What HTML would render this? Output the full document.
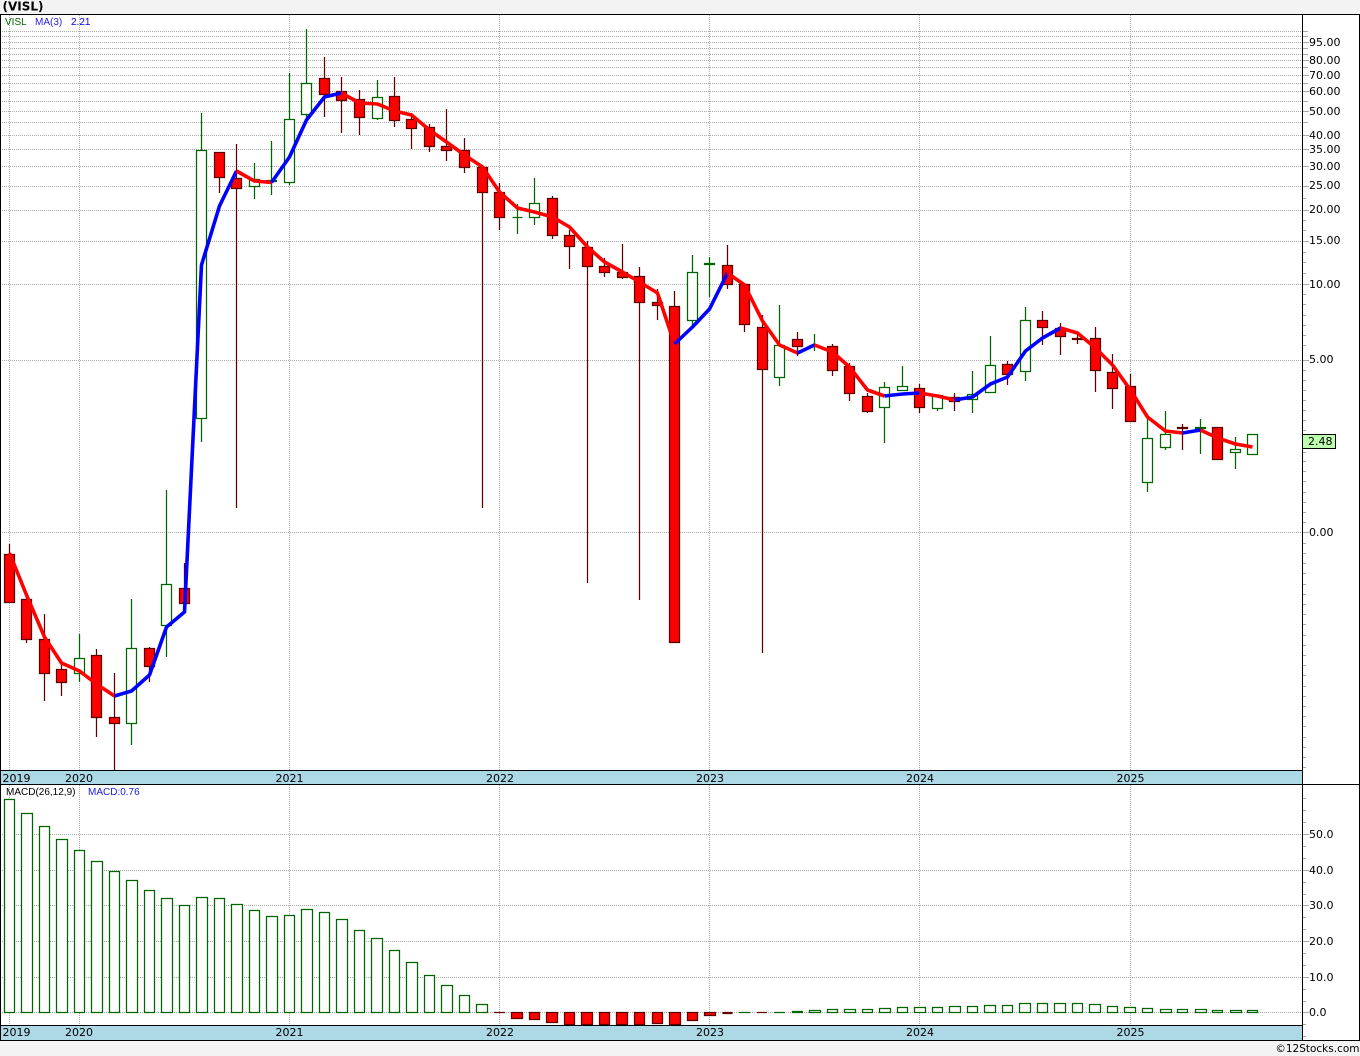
<!DOCTYPE html>
<html><head><meta charset="utf-8"><title>VISL</title>
<style>
html,body{margin:0;padding:0;background:#f3f3f3;width:1360px;height:1056px;overflow:hidden}
svg{display:block}
text{font-family:"DejaVu Sans","Liberation Sans",sans-serif;fill:#000}
.a{font-size:11px}.l{font-size:10px;font-family:"Liberation Sans",sans-serif}
</style></head><body>
<svg width="1360" height="1056" viewBox="0 0 1360 1056" xmlns="http://www.w3.org/2000/svg">
<rect x="0" y="14" width="1360" height="1026" fill="#fff"/>
<g shape-rendering="crispEdges" fill="none">
<path stroke="#a8a8a8" stroke-dasharray="1 1" d="M2 31.5H1303M2 36.5H1303M2 42.5H1303M2 48.5H1303M2 54.5H1303M2 60.5H1303M2 67.5H1303M2 75.5H1303M2 83.5H1303M2 91.5H1303M2 101.5H1303M2 111.5H1303M2 122.5H1303M2 135.5H1303M2 149.5H1303M2 166.5H1303M2 186.5H1303M2 210.5H1303M2 241.5H1303M2 284.5H1303M2 360.5H1303M2 532.5H1303M2 834.5H1303M2 870.5H1303M2 905.5H1303M2 941.5H1303M2 977.5H1303M2 1012.5H1303"/>
<path stroke="#a8a8a8" stroke-dasharray="1 1" d="M9.5 15V770M79.5 15V770M289.5 15V770M499.5 15V770M709.5 15V770M919.5 15V770M1130.5 15V770M9.5 785V1025M79.5 785V1025M289.5 785V1025M499.5 785V1025M709.5 785V1025M919.5 785V1025M1130.5 785V1025"/>
<path stroke="#a8a8a8" d="M1303 31.5h5M1303 36.5h5M1303 42.5h6M1303 48.5h5M1303 54.5h5M1303 60.5h6M1303 67.5h5M1303 75.5h6M1303 83.5h5M1303 91.5h6M1303 101.5h5M1303 111.5h6M1303 122.5h5M1303 135.5h6M1303 149.5h6M1303 166.5h6M1303 186.5h6M1303 198.5h3M1303 210.5h6M1303 220.5h3M1303 230.5h3M1303 241.5h6M1303 252.5h3M1303 262.5h3M1303 273.5h3M1303 284.5h6M1303 294.5h3M1303 304.5h3M1303 315.5h3M1303 325.5h3M1303 335.5h3M1303 345.5h3M1303 360.5h6M1303 370.5h3M1303 380.5h3M1303 390.5h3M1303 400.5h3M1303 410.5h3M1303 420.5h3M1303 430.5h3M1303 452.5h3M1303 461.5h3M1303 471.5h3M1303 481.5h3M1303 492.5h3M1303 502.5h3M1303 512.5h3M1303 522.5h3M1303 532.5h6M1303 543.5h3M1303 553.5h3M1303 563.5h3M1303 573.5h3M1303 584.5h3M1303 594.5h3M1303 604.5h3M1303 614.5h3M1303 624.5h3M1303 635.5h3M1303 645.5h3M1303 655.5h3M1303 665.5h3M1303 675.5h3M1303 686.5h3M1303 696.5h3M1303 706.5h3M1303 716.5h3M1303 726.5h3M1303 737.5h3M1303 747.5h3M1303 757.5h3M1303 767.5h3"/>
<path stroke="#a8a8a8" d="M1303 798.5h3M1303 810.5h3M1303 822.5h3M1303 834.5h6M1303 846.5h3M1303 858.5h3M1303 870.5h6M1303 882.5h3M1303 894.5h3M1303 905.5h6M1303 917.5h3M1303 929.5h3M1303 941.5h6M1303 953.5h3M1303 965.5h3M1303 977.5h6M1303 989.5h3M1303 1001.5h3M1303 1012.5h6M1303 1024.5h3M1303 1036.5h3"/>
</g>
<g fill="none" stroke-width="1.25">
<!-- down wicks -->
<path stroke="#5f0000" d="M9.5 544V603M26.5 597V643M44.5 614V701M61.5 663V696M96.5 649V737M114.5 673V770M149.5 647V682M184.5 563V603M219.5 152V193M236.5 144V508M324.5 57V117M341.5 77V133M359.5 90V135M394.5 77V127M411.5 113V149M429.5 124V152M446.5 109V161M464.5 138V173M482.5 165V508M499.5 183V230M552.5 196V239M569.5 230V269M587.5 241V583M604.5 258V277M622.5 244V279M639.5 267V600M657.5 289V320M674.5 291V642M727.5 245V289M744.5 283V332M762.5 315V653M797.5 332V356M832.5 344V376M849.5 363V401M867.5 393V413M919.5 384V413M954.5 393V411M1007.5 361V385M1042.5 311V345M1060.5 323V355M1077.5 332V344M1095.5 327V392M1112.5 354V409M1130.5 374V421M1182.5 424V450"/>
<!-- up wicks -->
<path stroke="#006400" d="M79.5 634V682M131.5 599V745M166.5 490V657M201.5 113V442M254.5 163V199M271.5 141V195M289.5 73V185M306.5 29V118M377.5 80V120M517.5 204V234M534.5 178V225M692.5 255V326M709.5 257V297M779.5 305V386M814.5 334V351M884.5 382V443M902.5 366V391M937.5 395V411M972.5 371V413M990.5 336V393M1025.5 307V381M1147.5 415V492M1165.5 411V450M1200.5 419V454M1235.5 437V469"/>
<!-- down bodies -->
<path fill="#ff0000" stroke="#5f0000" d="M4.5 554.5h10v48h-10zM21.5 599.5h10v40h-10zM39.5 639.5h10v34h-10zM56.5 669.5h10v13h-10zM91.5 655.5h10v62h-10zM109.5 717.5h10v6h-10zM144.5 648.5h10v18h-10zM179.5 588.5h10v15h-10zM214.5 152.5h10v25h-10zM231.5 178.5h10v10h-10zM319.5 78.5h10v16h-10zM336.5 91.5h10v9h-10zM354.5 99.5h10v18h-10zM389.5 96.5h10v24h-10zM406.5 119.5h10v9h-10zM424.5 127.5h10v19h-10zM441.5 146.5h10v4h-10zM459.5 150.5h10v17h-10zM477.5 167.5h10v25h-10zM494.5 192.5h10v25h-10zM547.5 198.5h10v37h-10zM564.5 235.5h10v11h-10zM582.5 247.5h10v19h-10zM599.5 266.5h10v6h-10zM617.5 272.5h10v5h-10zM634.5 276.5h10v26h-10zM652.5 302.5h10v3h-10zM669.5 306.5h10v336h-10zM722.5 265.5h10v19h-10zM739.5 284.5h10v40h-10zM757.5 327.5h10v42h-10zM792.5 339.5h10v7h-10zM827.5 346.5h10v24h-10zM844.5 366.5h10v27h-10zM862.5 396.5h10v15h-10zM914.5 388.5h10v19h-10zM949.5 397.5h10v4h-10zM1002.5 364.5h10v10h-10zM1037.5 320.5h10v7h-10zM1055.5 328.5h10v8h-10zM1072.5 338.5h10v1h-10zM1090.5 338.5h10v32h-10zM1107.5 372.5h10v16h-10zM1125.5 386.5h10v35h-10zM1177.5 427.5h10v1h-10zM1212.5 427.5h10v32h-10z"/>
<!-- up bodies -->
<path fill="#fff" stroke="#006400" d="M74.5 658.5h10v15h-10zM126.5 648.5h10v75h-10zM161.5 584.5h10v41h-10zM196.5 150.5h10v268h-10zM249.5 179.5h10v7h-10zM266.5 180.5h10v1h-10zM284.5 119.5h10v63h-10zM301.5 83.5h10v31h-10zM372.5 97.5h10v21h-10zM512.5 217.5h10M529.5 203.5h10v14h-10zM687.5 272.5h10v48h-10zM704.5 263.5h10v1h-10zM774.5 345.5h10v32h-10zM809.5 345.5h10M879.5 387.5h10v20h-10zM897.5 386.5h10v4h-10zM932.5 395.5h10v13h-10zM967.5 394.5h10v5h-10zM985.5 365.5h10v27h-10zM1020.5 320.5h10v51h-10zM1142.5 438.5h10v44h-10zM1160.5 434.5h10v13h-10zM1195.5 427.5h10v1h-10zM1230.5 449.5h10v3h-10zM1247.5 434.5h10v20h-10z"/>

<!-- MACD bars -->
<path fill="#fff" stroke="#006400" d="M4.5 799.5h10V1012.5h-10zM21.5 813.5h11V1012.5h-11zM39.5 826.5h10V1012.5h-10zM56.5 839.5h11V1012.5h-11zM74.5 850.5h10V1012.5h-10zM91.5 861.5h11V1012.5h-11zM109.5 871.5h10V1012.5h-10zM126.5 880.5h11V1012.5h-11zM144.5 890.5h10V1012.5h-10zM161.5 898.5h11V1012.5h-11zM179.5 905.5h10V1012.5h-10zM196.5 897.5h11V1012.5h-11zM214.5 898.5h10V1012.5h-10zM231.5 904.5h11V1012.5h-11zM249.5 910.5h10V1012.5h-10zM266.5 916.5h11V1012.5h-11zM284.5 915.5h10V1012.5h-10zM301.5 909.5h11V1012.5h-11zM319.5 912.5h10V1012.5h-10zM336.5 919.5h11V1012.5h-11zM354.5 930.5h10V1012.5h-10zM371.5 938.5h11V1012.5h-11zM389.5 950.5h10V1012.5h-10zM406.5 962.5h11V1012.5h-11zM424.5 975.5h10V1012.5h-10zM441.5 985.5h11V1012.5h-11zM459.5 995.5h10V1012.5h-10zM476.5 1004.5h11V1012.5h-11zM809.5 1010.5h11V1012.5h-11zM827.5 1009.5h10V1012.5h-10zM844.5 1009.5h11V1012.5h-11zM862.5 1009.5h10V1012.5h-10zM879.5 1008.5h11V1012.5h-11zM897.5 1007.5h10V1012.5h-10zM914.5 1007.5h11V1012.5h-11zM932.5 1007.5h10V1012.5h-10zM949.5 1006.5h11V1012.5h-11zM967.5 1006.5h10V1012.5h-10zM984.5 1005.5h11V1012.5h-11zM1002.5 1005.5h10V1012.5h-10zM1019.5 1003.5h11V1012.5h-11zM1037.5 1003.5h10V1012.5h-10zM1054.5 1003.5h11V1012.5h-11zM1072.5 1003.5h10V1012.5h-10zM1089.5 1004.5h11V1012.5h-11zM1107.5 1006.5h10V1012.5h-10zM1124.5 1007.5h11V1012.5h-11zM1142.5 1008.5h10V1012.5h-10zM1160.5 1009.5h11V1012.5h-11zM1177.5 1009.5h10V1012.5h-10zM1195.5 1009.5h11V1012.5h-11zM1212.5 1010.5h10V1012.5h-10zM1230.5 1010.5h11V1012.5h-11zM1247.5 1010.5h10V1012.5h-10z"/>
<path fill="#ff0000" stroke="#5f0000" d="M511.5 1012.5h11v6h-11zM529.5 1012.5h10v7h-10zM546.5 1012.5h11v10h-11zM564.5 1012.5h10v12h-10zM581.5 1012.5h11v12h-11zM599.5 1012.5h10v12h-10zM616.5 1012.5h11v12h-11zM634.5 1012.5h10v12h-10zM652.5 1012.5h10v11h-10zM669.5 1012.5h11v12h-11zM687.5 1012.5h10v8h-10zM704.5 1012.5h11v3h-11z"/>
<path stroke="#5f0000" d="M494 1012.5h11M722.5 1012.5h10M722.5 1013.5h10M757 1012.5h10"/>
<path stroke="#006400" d="M739 1012.5h11M774 1012.5h11M792 1011.5h11M792 1012.5h11"/>
</g>

<!-- moving average -->
<g fill="none" stroke-width="3.6" stroke-linejoin="round" stroke-linecap="butt">
<polyline stroke="#ff0000" points="9.5,553 26.5,595 44.5,637 61.5,663 79.5,671 96.5,684 114.5,696"/>
<polyline stroke="#0000ff" points="114.5,696 131.5,691 149.5,675 166.5,627 184.5,612 201.5,265 219.5,206 236.5,171"/>
<polyline stroke="#ff0000" points="236.5,171 254.5,181 271.5,182.5"/>
<polyline stroke="#0000ff" points="271.5,182.5 289.5,157 306.5,120 324.5,97 341.5,93"/>
<polyline stroke="#ff0000" points="341.5,93 359.5,103 377.5,104 394.5,111 411.5,115 429.5,130 446.5,142 464.5,155 482.5,167 499.5,192 517.5,208 534.5,212 552.5,217 569.5,227 587.5,247 604.5,262 622.5,272 639.5,282 657.5,293 674.5,344"/>
<polyline stroke="#0000ff" points="674.5,344 692.5,327 709.5,309 727.5,273"/>
<polyline stroke="#ff0000" points="727.5,273 744.5,285 762.5,321 779.5,345 797.5,353"/>
<polyline stroke="#0000ff" points="797.5,353 814.5,345"/>
<polyline stroke="#ff0000" points="814.5,345 832.5,352 849.5,367 867.5,390 884.5,396"/>
<polyline stroke="#0000ff" points="884.5,396 902.5,394 919.5,393"/>
<polyline stroke="#ff0000" points="919.5,393 937.5,396 954.5,400"/>
<polyline stroke="#0000ff" points="954.5,400 972.5,397 990.5,384 1007.5,377 1025.5,351 1042.5,338 1060.5,328"/>
<polyline stroke="#ff0000" points="1060.5,328 1077.5,333 1095.5,348 1112.5,365 1130.5,390 1147.5,417 1165.5,431 1182.5,433"/>
<polyline stroke="#0000ff" points="1182.5,433 1200.5,430"/>
<polyline stroke="#ff0000" points="1200.5,430 1217.5,438 1235.5,444 1252.5,447"/>
</g>

<!-- bands and frame -->
<g shape-rendering="crispEdges">
<rect x="0" y="770" width="1303" height="14" fill="#add8e6"/>
<rect x="0" y="1025" width="1303" height="15" fill="#add8e6"/>
<path fill="none" stroke="#000" d="M0 14.5H1360M0.5 14V1040M1359.5 14V1040M1302.5 14V1040M0 770.5H1303M0 784.5H1360M0 1025.5H1303M0 1040.5H1360"/>
<rect x="1302.5" y="434.5" width="33" height="14" fill="#bfffb0" stroke="#000"/>
</g>

<text x="2.5" y="10.5" style="font-size:12px;font-weight:bold">(VISL)</text>
<text class="l" x="5" y="25" style="fill:#006400">VISL</text>
<text class="l" x="35" y="25" style="fill:#2a1ee0">MA(3)</text>
<text class="l" x="71" y="25" style="fill:#0000ff">2.21</text>
<text class="l" x="6" y="795">MACD(26,12,9)</text>
<text class="l" x="88" y="795" style="fill:#1a1ae8">MACD:0.76</text>

<g class="a">
<text x="1309" y="46">95.00</text>
<text x="1309" y="64">80.00</text>
<text x="1309" y="79">70.00</text>
<text x="1309" y="95">60.00</text>
<text x="1309" y="115">50.00</text>
<text x="1309" y="139">40.00</text>
<text x="1309" y="153">35.00</text>
<text x="1309" y="170">30.00</text>
<text x="1309" y="189">25.00</text>
<text x="1309" y="213">20.00</text>
<text x="1309" y="244">15.00</text>
<text x="1309" y="288">10.00</text>
<text x="1309" y="363">5.00</text>
<text x="1309" y="536">0.00</text>
<text x="1308" y="445">2.48</text>
<text x="1309" y="838">50.0</text>
<text x="1309" y="874">40.0</text>
<text x="1309" y="909">30.0</text>
<text x="1309" y="945">20.0</text>
<text x="1309" y="981">10.0</text>
<text x="1309" y="1016">0.0</text>

<text x="2.5" y="782">2019</text>
<text x="65" y="782">2020</text>
<text x="275.5" y="782">2021</text>
<text x="486" y="782">2022</text>
<text x="696" y="782">2023</text>
<text x="906" y="782">2024</text>
<text x="1116.5" y="782">2025</text>
<text x="2.5" y="1036">2019</text>
<text x="65" y="1036">2020</text>
<text x="275.5" y="1036">2021</text>
<text x="486" y="1036">2022</text>
<text x="696" y="1036">2023</text>
<text x="906" y="1036">2024</text>
<text x="1116.5" y="1036">2025</text>
</g>
<text x="1359.5" y="1052" text-anchor="end" style="font-size:10.5px">©12Stocks.com</text>
</svg>
</body></html>
